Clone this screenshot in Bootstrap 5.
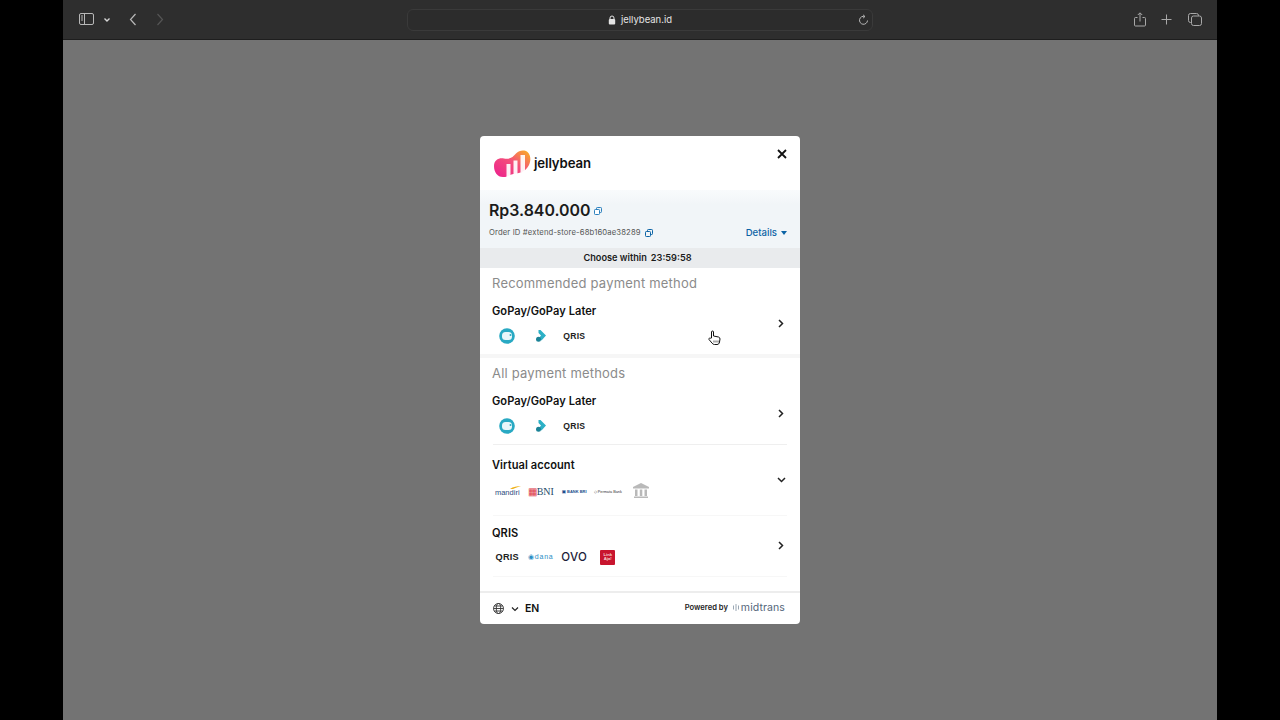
<!DOCTYPE html>
<html lang="en">
<head>
<meta charset="utf-8">
<title>jellybean.id</title>
<link href="https://cdn.jsdelivr.net/npm/bootstrap@5.3.0/dist/css/bootstrap.min.css" rel="stylesheet">
<style>
html,body{height:720px;overflow:hidden;background:#000;font-family:"Inter","Liberation Sans",sans-serif;color:#111}
.win{width:1154px;height:720px;margin-left:63px;background:#737373}
.tb{height:40px;background:#2e2e2e;border-bottom:1px solid #1e1e1e;padding:0 15px 0 16px}
.tb-l{width:328px}
.tb-r{width:329px}
.addr{width:466px;height:22px;margin-top:1px;border:1px solid #3a3a3a;border-radius:6px;background:#2c2c2c;color:#e4e4e4;font-size:9.5px}
.addr-in{gap:5px}
.rl{right:3px;top:4px}
.stage{height:680px;padding-top:96px}
.mdl{width:320px;height:488px;background:#fff;border-radius:4px;overflow:hidden}
.hd{height:54px;padding:14px 13px 0 14px}
.wordmark{font-size:13.2px;font-weight:600;letter-spacing:-.1px;margin-left:3px;line-height:26px}
.x-ic{position:absolute;right:13px;top:13px}
.sumry{height:58px;background:linear-gradient(#f9fbfc,#f1f5f8 25%);padding:11px 13px 0 9px}
.amt{font-size:15.9px;font-weight:600;line-height:20px;letter-spacing:0;color:#1b1b1b}
.copy1{margin-left:3px}
.oid{font-size:7.7px;line-height:12px;color:#555;margin-top:6px;letter-spacing:.13px}
.dtl{font-size:9.6px;color:#0b63a5;font-weight:500;line-height:12px;margin-top:6px}
.tmr{height:20px;background:#e9ebed;font-size:9.2px;font-weight:600;line-height:20px;padding-right:5px;gap:4px;color:#1b1b1b}
.sec-t{font-size:13px;color:#8b8b8b;line-height:16px;padding-left:12px;letter-spacing:.2px;margin-bottom:0}
.pm{padding:0 16px 0 12px}
.pm-t{font-size:11.1px;font-weight:600;line-height:14px;color:#111;letter-spacing:.05px}
.slots{margin-left:-1.5px}
.slot{width:33.5px;height:24px;flex:none}
.rule{height:1px;margin:0 13px;background:#efefef}
.rule-soft{background:#f7f7f7}
.band{height:4px;background:#f6f6f6}
.ftr{height:33px;border-top:2px solid #ededed;padding:0 15px 0 13px}
.lng{font-size:10.5px;font-weight:600;margin-left:6px}
.pw{font-size:7.6px;font-weight:600;color:#222;margin-right:5px}
.pw-row{margin-bottom:2px}
.mt-wd{font-size:10.5px;color:#54667a;letter-spacing:.1px;margin-left:2px}
.qr{font:700 8.600px "Liberation Sans",sans-serif;color:#222;letter-spacing:.2px}
.qr2{font-size:9.200px}
.mnd{font:400 7.5px "Liberation Sans",sans-serif;color:#2b4a80;position:relative;top:1px}
.swsh{position:absolute;right:-1px;top:-2px}
.bni{font:400 10px "Liberation Serif",serif;color:#254a68;letter-spacing:-.1px}
.bri{font:700 4px "Liberation Sans",sans-serif;color:#1d4f8d;white-space:nowrap}
.prm{font:400 3.8px "Liberation Sans",sans-serif;color:#333;white-space:nowrap}
.dna{font:400 7px "Liberation Sans",sans-serif;color:#2b8ec5;letter-spacing:.8px;white-space:nowrap}
.ovo{font:500 11.5px "Inter",sans-serif;color:#1c1c3a;letter-spacing:.3px}
.laj{width:15px;height:15px;background:#c8152e;border-radius:1px;color:#f6d5d5;font:700 4.200px/4.600px "Liberation Sans",sans-serif;text-align:center;padding-top:3px}
.chev6{margin-bottom:6px}
.chev5{margin-bottom:5px}
.chev-d{margin-bottom:2px;margin-right:-2px}
.crs{position:absolute;left:708px;top:330px}
.gap-a{margin-top:6px}
.gap-b{margin-top:7px}
.gap-c{margin-top:5px}
.top-13{margin-top:13px}
.top-10{margin-top:10px}
.top-7{margin-top:7px}
.top-6{margin-top:6px}
.top-12{margin-top:12px}
.ms-t0{margin-left:3px}
.ms-t1{margin-left:4px}
.ms-t2{margin-left:18px}
.ms-t3{margin-left:19px}
.ms-t4{margin-left:15px}
.ms-t5{margin-left:16px}
.ms-t6{margin-left:7px}
</style>
</head>
<body>
<div class="win">
  <div class="tb d-flex align-items-center justify-content-between">
    <div class="tb-l d-flex align-items-center">
      <svg width="16" height="13" viewBox="0 0 16 13" fill="none" stroke="#b8b8b8"><rect x=".5" y=".5" width="14" height="11" rx="1.5"/><path d="M5.500 .5v11M2 3h2M2 5h2M2 7h2"/></svg>
      <svg class="ms-2" width="8" height="6" viewBox="0 0 8 6" fill="none" stroke="#d6d6d6" stroke-width="1.4"><path d="M1.500 1.500 4 4l2.500-2.500"/></svg>
      <svg class="ms-t2" width="8" height="13" viewBox="0 0 8 13" fill="none" stroke="#b8b8b8" stroke-width="1.2"><path d="M6.500 1 1.500 6.500l5 5.500"/></svg>
      <svg class="ms-t3" width="8" height="13" viewBox="0 0 8 13" fill="none" stroke="#555" stroke-width="1.2"><path d="M1.500 1l5 5.500-5 5.500"/></svg>
    </div>
    <div class="addr position-relative d-flex align-items-center justify-content-center">
      <div class="addr-in d-flex align-items-center">
        <svg width="8" height="10" viewBox="0 0 8 10"><path d="M2 4V3a2 2 0 0 1 4 0v1" fill="none" stroke="#e4e4e4" stroke-width="1"/><rect x=".8" y="4" width="6.400" height="5.500" rx="1" fill="#e4e4e4"/></svg>
        <span>jellybean.id</span>
      </div>
      <svg class="position-absolute rl" width="11" height="12" viewBox="0 0 11 12" fill="none" stroke="#b8b8b8"><path d="M6.800 2.500A4 4 0 1 0 9.500 6.500"/><path d="M5 .8l2 1.700L5 4.200" stroke-width=".9"/></svg>
    </div>
    <div class="tb-r d-flex align-items-center justify-content-end">
      <svg width="12" height="15" viewBox="0 0 12 15" fill="none" stroke="#a8a8a8"><path d="M3.500 5.500H1.500a1 1 0 0 0-1 1v6.500a1 1 0 0 0 1 1h9a1 1 0 0 0 1-1V6.500a1 1 0 0 0-1-1H8.500M6 9.500V1M3.800 3 6 .8 8.200 3"/></svg>
      <svg class="ms-t4" width="11" height="11" viewBox="0 0 11 11" stroke="#a8a8a8"><path d="M5.500 .5v10M.5 5.500h10"/></svg>
      <svg class="ms-t5" width="14" height="13" viewBox="0 0 14 13" fill="#2e2e2e" stroke="#a8a8a8"><rect x=".5" y=".5" width="10" height="9" rx="2"/><rect x="3.500" y="3" width="10" height="9.500" rx="2"/></svg>
    </div>
  </div>
  <div class="stage d-flex justify-content-center">
    <div class="mdl d-flex flex-column position-relative">
      <div class="hd d-flex position-relative">
        <svg width="37" height="28" viewBox="0 0 37 28">
          <defs><linearGradient id="lg" x1="0" y1="1" x2="1" y2="0"><stop offset="0" stop-color="#ec1f8e"/><stop offset=".55" stop-color="#f4507a"/><stop offset="1" stop-color="#f9b51f"/></linearGradient></defs>
          <path d="M0 16C0 10 5 7.500 10 8.500 16 9.500 19 7 22 3.500 25 .5 30-.5 33.500 2 37 5 37 11 35 15 32 21 27 23 22 23.500 16 24 15 27 9 27 3 27 0 22 0 16Z" fill="url(#lg)"/>
          <path d="M12.500 14h4v14h-4zM19.500 10.500h4V25h-4zM26.500 5h4.500v17l-4.500 1z" fill="#fff" opacity=".92"/>
        </svg>
        <span class="wordmark">jellybean</span>
        <svg class="x-ic" width="10" height="10" viewBox="0 0 10 10" stroke="#111" stroke-width="1.800"><path d="M1 1l8 8M9 1l-8 8"/></svg>
      </div>
      <div class="sumry d-flex flex-column">
        <div class="d-flex align-items-center">
          <span class="amt">Rp3.840.000</span>
          <svg class="ms-t0" width="8" height="8" viewBox="0 0 8 8" fill="none" stroke="#2a7fbd"><rect x="2.500" y=".5" width="5" height="5" rx=".8"/><rect x=".5" y="2.500" width="5" height="5" rx=".8" fill="#fff"/></svg>
        </div>
        <div class="d-flex justify-content-between">
          <div class="oid d-flex align-items-center">Order ID #extend-store-68b160ae38289
            <svg class="ms-t1" width="8" height="8" viewBox="0 0 8 8" fill="none" stroke="#0b63a5"><rect x="2.500" y=".5" width="5" height="5" rx=".8"/><rect x=".5" y="2.500" width="5" height="5" rx=".8" fill="#f1f5f8"/></svg>
          </div>
          <div class="dtl d-flex align-items-center">Details
            <svg class="ms-t1" width="6" height="4" viewBox="0 0 6 4" fill="#0b63a5"><path d="M0 0h6L3 4z"/></svg>
          </div>
        </div>
      </div>
      <div class="tmr d-flex justify-content-center"><span>Choose within</span><span>23:59:58</span></div>

      <div class="sec-t top-7">Recommended payment method</div>
      <div class="pm d-flex align-items-center justify-content-between top-13">
        <div>
          <div class="pm-t">GoPay/GoPay Later</div>
          <div class="slots d-flex align-items-center gap-a">
            <div class="slot d-flex align-items-center justify-content-center"><svg width="16" height="16" viewBox="0 0 16 16"><circle cx="8" cy="8" r="7.800" fill="#29a9c3"/><rect x="3" y="4" width="10" height="8" rx="3.500" fill="#eaf7fa"/><circle cx="11.500" cy="7" r="1" fill="#29a9c3"/></svg></div>
            <div class="slot d-flex align-items-center justify-content-center"><svg width="10" height="12" viewBox="0 0 10 12"><path d="M2.500 0h2L10 5.500 5.500 10.500 3 8l2-2.500L2.500 3z" fill="#2cb0c6"/><circle cx="2.500" cy="9.300" r="2.500" fill="#1b8397"/></svg></div>
            <div class="slot d-flex align-items-center justify-content-center"><span class="qr">QRIS</span></div>
          </div>
        </div>
        <svg class="chev6" width="6" height="9" viewBox="0 0 6 9" fill="none" stroke="#222" stroke-width="1.500"><path d="M1 1l3.500 3.500L1 8"/></svg>
      </div>
      <div class="band top-6"></div>

      <div class="sec-t top-7">All payment methods</div>
      <div class="pm d-flex align-items-center justify-content-between top-13">
        <div>
          <div class="pm-t">GoPay/GoPay Later</div>
          <div class="slots d-flex align-items-center gap-a">
            <div class="slot d-flex align-items-center justify-content-center"><svg width="16" height="16" viewBox="0 0 16 16"><circle cx="8" cy="8" r="7.800" fill="#29a9c3"/><rect x="3" y="4" width="10" height="8" rx="3.500" fill="#eaf7fa"/><circle cx="11.500" cy="7" r="1" fill="#29a9c3"/></svg></div>
            <div class="slot d-flex align-items-center justify-content-center"><svg width="10" height="12" viewBox="0 0 10 12"><path d="M2.500 0h2L10 5.500 5.500 10.500 3 8l2-2.500L2.500 3z" fill="#2cb0c6"/><circle cx="2.500" cy="9.300" r="2.500" fill="#1b8397"/></svg></div>
            <div class="slot d-flex align-items-center justify-content-center"><span class="qr">QRIS</span></div>
          </div>
        </div>
        <svg class="chev6" width="6" height="9" viewBox="0 0 6 9" fill="none" stroke="#222" stroke-width="1.500"><path d="M1 1l3.500 3.500L1 8"/></svg>
      </div>
      <div class="rule top-6"></div>

      <div class="pm d-flex align-items-center justify-content-between top-13">
        <div>
          <div class="pm-t">Virtual account</div>
          <div class="slots d-flex align-items-center gap-b">
            <div class="slot d-flex align-items-center justify-content-center"><span class="mnd">mandiri<svg class="swsh" width="11" height="3" viewBox="0 0 11 3" fill="#efb118"><path d="M0 3C3 .5 7 .2 11 0 8 1 5 2 3 3z"/></svg></span></div>
            <div class="slot d-flex align-items-center justify-content-center"><span class="bni"><span class="text-danger">&#9638;</span>BNI</span></div>
            <div class="slot d-flex align-items-center justify-content-center"><span class="bri">▣ BANK BRI</span></div>
            <div class="slot d-flex align-items-center justify-content-center"><span class="prm">◇ Permata Bank</span></div>
            <div class="slot d-flex align-items-center justify-content-center"><svg width="16" height="16" viewBox="0 0 16 16" fill="#b9b9b9"><path d="M8 0 16 4v1.500H0V4z"/><path d="M2 6.500h2.500v6.500H2zM6.800 6.500h2.500v6.500H6.800zM11.500 6.500H14v6.500h-2.500z"/><path d="M1 13.500h14V15H1z"/></svg></div>
          </div>
        </div>
        <svg class="chev-d" width="9" height="6" viewBox="0 0 9 6" fill="none" stroke="#222" stroke-width="1.500"><path d="M1 1l3.500 3.500L8 1"/></svg>
      </div>
      <div class="rule rule-soft top-12"></div>

      <div class="pm d-flex align-items-center justify-content-between top-10">
        <div>
          <div class="pm-t">QRIS</div>
          <div class="slots d-flex align-items-center gap-c">
            <div class="slot d-flex align-items-center justify-content-center"><span class="qr qr2">QRIS</span></div>
            <div class="slot d-flex align-items-center justify-content-center"><span class="dna">◉dana</span></div>
            <div class="slot d-flex align-items-center justify-content-center"><span class="ovo">OVO</span></div>
            <div class="slot d-flex align-items-center justify-content-center"><div class="laj">Link<br>Aja!</div></div>
          </div>
        </div>
        <svg class="chev5" width="6" height="9" viewBox="0 0 6 9" fill="none" stroke="#222" stroke-width="1.500"><path d="M1 1l3.500 3.500L1 8"/></svg>
      </div>
      <div class="rule rule-soft top-7"></div>

      <div class="ftr d-flex align-items-center justify-content-between mt-auto">
        <div class="d-flex align-items-center">
          <svg width="11" height="11" viewBox="0 0 11 11" fill="none" stroke="#333" stroke-width=".9"><circle cx="5.500" cy="5.500" r="5"/><ellipse cx="5.500" cy="5.500" rx="2.200" ry="5"/><path d="M.5 5.500h10M1.200 3h8.600M1.200 8h8.600"/></svg>
          <svg class="ms-t6" width="8" height="6" viewBox="0 0 8 6" fill="none" stroke="#222" stroke-width="1.200"><path d="M1 1.500l3 3 3-3"/></svg>
          <span class="lng">EN</span>
        </div>
        <div class="d-flex align-items-center pw-row">
          <span class="pw">Powered by</span>
          <svg width="6" height="7" viewBox="0 0 6 7" stroke="#9aa7b4"><path d="M.5 1.500v4M3 0v7M5.500 1.500v4"/></svg>
          <span class="mt-wd">midtrans</span>
        </div>
      </div>
    </div>
  </div>
</div>
<svg class="crs" width="13" height="15" viewBox="0 0 13 15"><path d="M3.500 8V2a1 1 0 0 1 2 0v4l5 1c1 .3 1.500 1 1.500 2l-.5 3c-.2 1.500-1 2.500-2.500 2.500H6.500c-1 0-1.800-.5-2.400-1.300L1 9.500c-.5-1 .8-2 1.500-1.300z" fill="#fff" stroke="#111"/><path d="M6 10.500v2M8 10.500v2M10 10.500v2" stroke="#111" stroke-width=".7"/></svg>
<script src="https://cdn.jsdelivr.net/npm/bootstrap@5.3.0/dist/js/bootstrap.bundle.min.js"></script>
</body>
</html>
